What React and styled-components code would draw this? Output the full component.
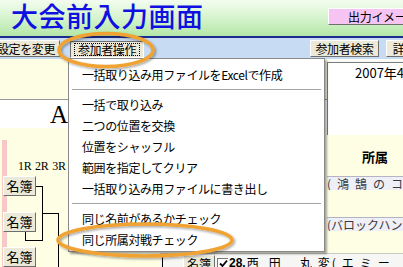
import React from 'react';
import styled, { createGlobalStyle } from 'styled-components';

const UI_FONT = `"Noto Sans CJK JP", "Noto Sans", sans-serif`;
const YELLOW = '#fefee4';
const BEIGE = '#ece9d8';

const GlobalStyle = createGlobalStyle`
  html, body { margin: 0; padding: 0; background: #fff; }
  body { font-family: ${UI_FONT}; }
`;

const Page = styled.div`
  position: relative;
  width: 403px;
  height: 267px;
  overflow: hidden;
  display: flex;
  flex-direction: column;
  font-family: ${UI_FONT};
  font-size: 12px;
  color: #000;
`;

const Header = styled.header`
  height: 36px;
  flex-shrink: 0;
  display: flex;
  align-items: flex-start;
  background: linear-gradient(to bottom, #f3fcef 0%, #d6f4cd 50%, #b4e7a8 100%);
  border-bottom: 2px solid #1b2c8e;
  overflow: hidden;
`;

const Title = styled.h1`
  margin: 0;
  padding: 1px 0 0 11px;
  font-size: 27px;
  line-height: 30px;
  font-weight: 500;
  letter-spacing: 0.5px;
  color: #1010e0;
  white-space: nowrap;
`;

const OutputButton = styled.button`
  flex-shrink: 0;
  margin: 8px -40px 0 auto;
  width: 115px;
  height: 17px;
  padding: 0 0 0 19px;
  text-align: left;
  font-family: inherit;
  font-size: 12px;
  line-height: 15px;
  letter-spacing: -0.3px;
  color: #000;
  background: #f5c4f2;
  border: 1px solid;
  border-color: #fff #6e6e6e #6e6e6e #fff;
`;

const Toolbar = styled.div`
  height: 21px;
  flex-shrink: 0;
  display: flex;
  align-items: center;
  background: #c7dbf3;
  overflow: hidden;
`;

const ToolButton = styled.button`
  position: relative;
  flex-shrink: 0;
  width: ${p => p.$w}px;
  margin-left: ${p => p.$ml || 0}px;
  height: 17px;
  padding: 0;
  font-family: inherit;
  font-size: 12px;
  line-height: 15px;
  letter-spacing: -0.4px;
  white-space: nowrap;
  color: #000;
  background: ${BEIGE};
  border: 1px solid;
  border-color: ${p => (p.$pressed ? '#6e6e6e #fff #fff #6e6e6e' : '#fff #6e6e6e #6e6e6e #fff')};
  margin-top: ${p => (p.$pressed ? 1 : 0)}px;

  ${p => p.$pressed && `
    &::after {
      content: '';
      position: absolute;
      inset: 1px 3px 1px 3px;
      border: 1px dotted #000;
    }
  `}
`;

const Body = styled.div`
  position: relative;
  flex: 1;
  display: flex;
  flex-direction: column;
`;

const Upper = styled.div`
  height: 194px;
  display: flex;
`;

const LeftPane = styled.div`
  width: 327px;
  flex-shrink: 0;
  display: flex;
  flex-direction: column;
`;

const InfoBand = styled.div`
  height: 40px;
  background: ${YELLOW};
  border-bottom: 1px solid #9a9a9a;
`;

const TitleBand = styled.div`
  height: 28px;
  background: #fff;
  padding-left: 50px;
  font-family: "Liberation Serif", serif;
  font-size: 25px;
  line-height: 30px;
`;

const BracketArea = styled.div`
  flex: 1;
  background: ${YELLOW};
`;

const RightPane = styled.div`
  flex: 1;
  display: flex;
  flex-direction: column;
  padding-top: 3px;
  background: #fbfbf6;
`;

const DateBox = styled.div`
  height: 72px;
  background: #fff;
  border-top: 1px solid #7a7a7a;
  border-left: 1px solid #7a7a7a;
  padding: 2px 0 0 27px;
  font-size: 13px;
  line-height: 16px;
  white-space: nowrap;
`;

const AffHeader = styled.div`
  height: 42px;
  background: ${YELLOW};
  padding: 13px 0 0 35px;
  box-sizing: border-box;
  font-size: 13px;
  font-weight: 700;
  line-height: 18px;
`;

const DataRow = styled.div`
  height: 13px;
  background: #eff0f7;
  border-top: 1px solid #b4b4c4;
  font-size: 12px;
  line-height: 13px;
  color: #3a3a3a;
  white-space: nowrap;
  letter-spacing: ${p => p.$spread || 0}px;
`;

const Filler = styled.div`
  height: ${p => p.$h}px;
  background: ${YELLOW};
`;

const EntryRow = styled.div`
  flex: 1;
  display: flex;
  background: ${YELLOW};
  padding-left: 160px;
`;

const EntryCells = styled.div`
  flex: 1;
  display: flex;
  align-items: center;
  height: 16px;
  padding: 1px 0 0 23px;
  background: #f6f6f4;
  border-top: 1px solid #c9c9c9;
  white-space: nowrap;
  font-size: 12px;
  line-height: 14px;
`;

const SmallButton = styled.span`
  display: inline-block;
  width: 30px;
  height: 15px;
  text-align: center;
  background: ${BEIGE};
  border: 1px solid;
  border-color: #fff #6e6e6e #6e6e6e #fff;
  font-size: 12px;
  line-height: 15px;
`;

const CheckBox = styled.span`
  display: inline-flex;
  align-items: center;
  justify-content: center;
  width: 10px;
  height: 10px;
  margin-left: 2px;
  background: #fff;
  border-left: 1px solid #777;
  border-top: 1px solid #777;
`;

const EntryNo = styled.span`
  margin-left: 1px;
  font-family: "Liberation Sans", sans-serif;
  font-weight: 700;
  font-size: 12px;
`;

const NameChar = styled.span`
  margin-left: ${p => p.$ml || 0}px;
`;

const Spread = styled.span`
  letter-spacing: ${p => p.$gap}px;
  margin-left: ${p => p.$ml || 0}px;
`;

const BracketLayer = styled.div`
  position: absolute;
  left: 0;
  top: 69px;
  width: 180px;
  height: 139px;
  z-index: 1;
`;

const BracketLines = styled.svg`
  position: absolute;
  left: 0;
  top: 0;
`;

const RoundLabel = styled.div`
  position: absolute;
  left: 18px;
  top: 31px;
  font-family: "Liberation Serif", serif;
  font-size: 12px;
  line-height: 14px;
  letter-spacing: -0.3px;
  word-spacing: 1px;
`;

const RosterButton = styled.span`
  position: absolute;
  left: 3px;
  top: ${p => p.$top}px;
  width: 31px;
  height: 18px;
  text-align: center;
  background: ${BEIGE};
  border: 1px solid;
  border-color: #fff #6e6e6e #6e6e6e #fff;
  font-size: 13px;
  line-height: 18px;
`;

const Menu = styled.div`
  position: absolute;
  left: 68px;
  top: 58px;
  width: 257px;
  height: 194px;
  box-sizing: border-box;
  padding: 5px 0 1px;
  background: #fff;
  border: 1px solid #8a8a8a;
  box-shadow: 2px 2px 2px rgba(0, 0, 0, 0.35);
  z-index: 5;
`;

const MenuItem = styled.div`
  height: 21px;
  padding-left: 13px;
  font-size: 12px;
  line-height: 21px;
  letter-spacing: -0.4px;
  white-space: nowrap;
`;

const MenuSeparator = styled.div`
  height: 9px;
  display: flex;
  align-items: center;
  padding: 0 3px;

  &::before {
    content: '';
    flex: 1;
    height: 1px;
    background: #a5a5a5;
  }
`;

const Annotations = styled.svg`
  position: absolute;
  left: 0;
  top: 0;
  pointer-events: none;
  z-index: 10;
`;

const menuGroups = [
  ['一括取り込み用ファイルをExcelで作成'],
  ['一括で取り込み', '二つの位置を交換', '位置をシャッフル', '範囲を指定してクリア', '一括取り込み用ファイルに書き出し'],
  ['同じ名前があるかチェック', '同じ所属対戦チェック'],
];

const rosterTops = [48, 84, 119];

const App = () => (
  <Page>
    <GlobalStyle />
    <Header>
      <Title>大会前入力画面</Title>
      <OutputButton>出力イメージ</OutputButton>
    </Header>

    <Toolbar>
      <ToolButton $w={68} $ml={-8}>設定を変更</ToolButton>
      <ToolButton $w={74} $ml={10} $pressed>参加者操作</ToolButton>
      <ToolButton $w={69} $ml={166}>参加者検索</ToolButton>
      <ToolButton $w={60} $ml={7}>詳細設定</ToolButton>
    </Toolbar>

    <Body>
      <Upper>
        <LeftPane>
          <InfoBand />
          <TitleBand>A</TitleBand>
          <BracketArea />
        </LeftPane>
        <RightPane>
          <DateBox>2007年4月</DateBox>
          <AffHeader>所属</AffHeader>
          <DataRow $spread={6}>(鴻鵠のコ</DataRow>
          <Filler $h={27} />
          <DataRow>(バロックハンド</DataRow>
          <Filler $h={23} />
        </RightPane>
      </Upper>

      <EntryRow>
        <EntryCells>
          <SmallButton>名簿</SmallButton>
          <CheckBox>
            <svg width="9" height="9" viewBox="0 0 9 9">
              <path d="M1 4.5 L3.5 7 L8 1.5" fill="none" stroke="#000" strokeWidth="1.8" />
            </svg>
          </CheckBox>
          <EntryNo>28.</EntryNo>
          <NameChar $ml={1}>西</NameChar>
          <NameChar $ml={10}>田</NameChar>
          <NameChar $ml={19}>丸</NameChar>
          <NameChar $ml={6}>変</NameChar>
          <Spread $gap={6} $ml={2}>(エミー</Spread>
        </EntryCells>
      </EntryRow>

      <BracketLayer>
        <BracketLines width="180" height="139" viewBox="0 0 180 139">
          <rect x="2" y="12" width="5" height="127" fill="#f7c8c8" />
          <g stroke="#000" strokeWidth="1" fill="none" shapeRendering="crispEdges">
            <path d="M35 58.5 H42.5 V112.5" />
            <path d="M42.5 85.5 H58.5 V139" />
            <path d="M25.5 103 V112.5 H42.5" />
            <path d="M162.5 128 V139" />
          </g>
        </BracketLines>
        <RoundLabel>1R 2R 3R</RoundLabel>
        {rosterTops.map(t => (
          <RosterButton key={t} $top={t}>名簿</RosterButton>
        ))}
      </BracketLayer>
    </Body>

    <Menu>
      {menuGroups.map((group, gi) => (
        <React.Fragment key={gi}>
          {gi > 0 && <MenuSeparator />}
          {group.map(label => (
            <MenuItem key={label}>{label}</MenuItem>
          ))}
        </React.Fragment>
      ))}
    </Menu>

    <Annotations width="403" height="267" viewBox="0 0 403 267">
      <defs>
        <filter id="ring-shadow" x="-10%" y="-30%" width="120%" height="160%">
          <feDropShadow dx="1.5" dy="1.5" stdDeviation="1" floodColor="#000" floodOpacity="0.35" />
        </filter>
      </defs>
      <ellipse cx="106" cy="50" rx="47" ry="16.5" fill="none" stroke="#f0a232" strokeWidth="3.5" filter="url(#ring-shadow)" />
      <ellipse cx="145" cy="240" rx="87" ry="16" fill="none" stroke="#f0a232" strokeWidth="3.5" filter="url(#ring-shadow)" />
    </Annotations>
  </Page>
);

export default App;
